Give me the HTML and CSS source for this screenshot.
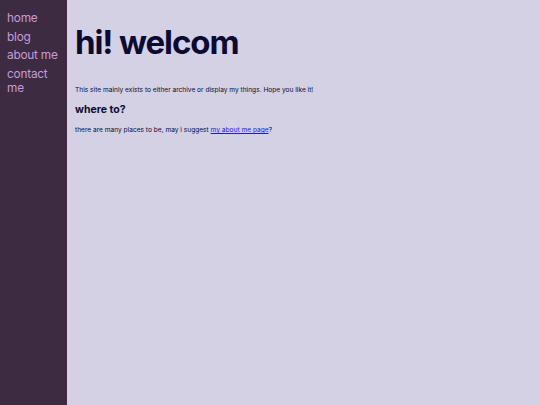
FILE: index.html
```html
<!DOCTYPE html>
<html>
<head>
<meta charset="utf-8">
<link rel="stylesheet" href="styles.css">
</head>
<body>
<div class="layout">
  <nav class="sidebar">
    <a class="nav-link" href="#">home</a>
    <a class="nav-link" href="#">blog</a>
    <a class="nav-link" href="#">about me</a>
    <a class="nav-link" href="#">contact me</a>
  </nav>
  <main class="content">
    <h1 class="title">hi! welcom</h1>
    <p class="text">This site mainly exists to either archive or display my things. Hope you like it!</p>
    <h2 class="subtitle">where to?</h2>
    <p class="text">there are many places to be, may i suggest <a class="link" href="#">my about me page</a>?</p>
  </main>
</div>
</body>
</html>
```
FILE: styles.css
```css
html, body {
  margin: 0;
  padding: 0;
  height: 100%;
}
body {
  background: #d3d1e3;
  font-family: "Inter", "DejaVu Sans", sans-serif;
}
.layout {
  display: flex;
  min-height: 100%;
}
.sidebar {
  width: 60px;
  flex: none;
  background: #3d2b41;
  padding: 11px 0 0 7px;
  display: flex;
  flex-direction: column;
  gap: 4px;
}
.nav-link {
  color: #c79bdb;
  text-decoration: none;
  font-size: 11.8px;
  line-height: 14.5px;
  letter-spacing: -0.2px;
}
.content {
  flex: 1;
  padding: 0 8px;
  color: #0b0a33;
}
.title {
  margin: 23px 0 0;
  font-size: 33px;
  line-height: 38px;
  font-weight: 700;
  letter-spacing: -1.1px;
}
.text {
  font-size: 6.6px;
  line-height: 9px;
  margin: 25px 0 0;
}
.subtitle {
  font-size: 10.5px;
  line-height: 13px;
  margin: 8px 0 0;
}
.subtitle + .text {
  margin-top: 10px;
}
.link {
  color: #1a1ae0;
}
```
